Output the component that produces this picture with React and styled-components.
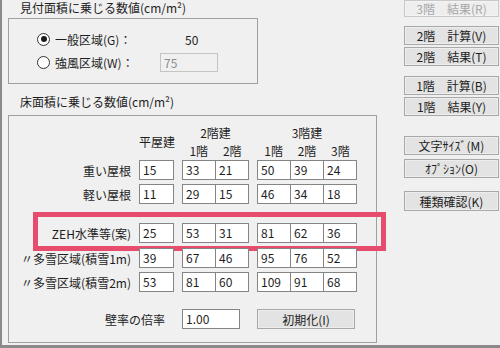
import React from 'react';
import styled, { createGlobalStyle } from 'styled-components';

const GlobalStyle = createGlobalStyle`
  html, body {
    margin: 0;
    padding: 0;
    background: #f0f0f0;
  }
  body {
    font-family: "Noto Sans CJK JP", "Liberation Sans", sans-serif;
    font-size: 12px;
    color: #1e1e1e;
  }
`;

const Window = styled.div`
  width: 500px;
  height: 348px;
  box-sizing: border-box;
  border-left: 2px solid #8a8a8a;
  border-bottom: 3px solid #8a8a8a;
  background: #f0f0f0;
  display: flex;
  overflow: hidden;
`;

const LeftPane = styled.div`
  width: 375px;
  padding-left: 6px;
  display: flex;
  flex-direction: column;
`;

const RightPane = styled.div`
  width: 95px;
  margin-left: 21px;
  display: flex;
  flex-direction: column;
`;

const GroupTitle = styled.div`
  height: 16px;
  line-height: 16px;
  padding-left: 12px;
  margin-top: ${p => p.$mt || 0}px;
  white-space: nowrap;
`;

const GroupBox = styled.div`
  box-sizing: border-box;
  width: ${p => p.$w}px;
  height: ${p => p.$h}px;
  margin-top: ${p => p.$mt}px;
  border: 1px solid #a0a0a0;
  padding: ${p => p.$pad};
`;

const RadioRow = styled.div`
  display: flex;
  align-items: center;
  height: 20px;
  & + & {
    margin-top: 3px;
  }
`;

const Radio = styled.span`
  position: relative;
  box-sizing: border-box;
  width: 13px;
  height: 13px;
  border-radius: 50%;
  border: 1px solid #333;
  background: #fff;
  flex: none;
  &::after {
    content: '';
    display: ${p => (p.$checked ? 'block' : 'none')};
    position: absolute;
    left: 2.5px;
    top: 2.5px;
    width: 6px;
    height: 6px;
    border-radius: 50%;
    background: #1a1a1a;
  }
`;

const RadioLabel = styled.span`
  width: 105px;
  margin-left: 5px;
  white-space: nowrap;
`;

const StaticValue = styled.span`
  margin-left: 25px;
`;

const Field = styled.div`
  box-sizing: border-box;
  width: ${p => p.$w || 34}px;
  height: ${p => p.$h || 20}px;
  border: 1px solid ${p => (p.$disabled ? '#c4c4c4' : '#858585')};
  background: ${p => (p.$disabled ? '#f0f0f0' : '#fff')};
  color: ${p => (p.$disabled ? '#8c8c8c' : '#1e1e1e')};
  padding-left: 3px;
  line-height: 18px;
  flex: none;
  & + & {
    margin-left: -1px;
  }
`;

const FieldGroup = styled.div`
  display: flex;
`;

const TableGrid = styled.div`
  display: grid;
  grid-template-columns: 122px 35px 67px 100px;
  column-gap: 8px;
`;

const HeadGrid = styled(TableGrid)`
  grid-template-rows: 16px 16px;
  row-gap: 2px;
  line-height: 16px;
`;

const HeadCell = styled.div`
  grid-column: ${p => p.$col};
  grid-row: ${p => p.$row};
  align-self: center;
  text-align: center;
  white-space: nowrap;
`;

const SubHeads = styled.div`
  grid-column: ${p => p.$col};
  grid-row: 2;
  display: flex;
  & > span {
    flex: 1;
    text-align: center;
  }
`;

const DataRow = styled(TableGrid)`
  position: relative;
  height: 20px;
  align-items: center;
  margin-top: ${p => p.$mt}px;
`;

const RowLabel = styled.div`
  grid-column: ${p => (p.$span ? '1 / 3' : '1')};
  text-align: right;
  white-space: nowrap;
  padding-right: ${p => p.$pr || 0}px;
`;

const Highlight = styled.div`
  position: absolute;
  top: -11px;
  bottom: -8px;
  left: 24px;
  right: -10px;
  border: 5px solid #e84c6c;
  pointer-events: none;
`;

const Button = styled.div`
  box-sizing: border-box;
  width: ${p => p.$w || 95}px;
  height: ${p => p.$h || 19}px;
  margin-top: ${p => p.$mt || 0}px;
  border: 1px solid ${p => (p.$disabled ? '#c8c8c8' : '#a8a8a8')};
  background: ${p => (p.$disabled ? '#eeeeee' : '#e3e3e3')};
  box-shadow: inset 0 0 0 1px ${p => (p.$disabled ? '#f4f4f4' : '#ededed')};
  color: ${p => (p.$disabled ? '#a8a8a8' : '#1e1e1e')};
  display: flex;
  align-items: center;
  justify-content: center;
  white-space: nowrap;
  flex: none;
`;

const rows = [
  { label: '重い屋根', mt: 1, v: ['15', '33', '21', '50', '39', '24'] },
  { label: '軽い屋根', mt: 4, v: ['11', '29', '15', '46', '34', '18'] },
  { label: 'ZEH水準等(案)', mt: 19, v: ['25', '53', '31', '81', '62', '36'], mark: true },
  { label: '〃多雪区域(積雪1m)', mt: 5, v: ['39', '67', '46', '95', '76', '52'] },
  { label: '〃多雪区域(積雪2m)', mt: 4, v: ['53', '81', '60', '109', '91', '68'] },
];

const buttons = [
  { text: '3階　結果(R)', mt: 0, h: 17, disabled: true },
  { text: '2階　計算(V)', mt: 9 },
  { text: '2階　結果(T)', mt: 2 },
  { text: '1階　計算(B)', mt: 10 },
  { text: '1階　結果(Y)', mt: 2 },
  { text: '文字ｻｲｽﾞ(M)', mt: 20 },
  { text: 'ｵﾌﾟｼｮﾝ(O)', mt: 4 },
  { text: '種類確認(K)', mt: 13, h: 20 },
];

export default function App() {
  return (
    <>
      <GlobalStyle />
      <Window>
        <LeftPane>
          <GroupTitle>見付面積に乗じる数値(cm/m²)</GroupTitle>
          <GroupBox $w={250} $h={66} $mt={2} $pad="10px 0 0 28px">
            <RadioRow>
              <Radio $checked />
              <RadioLabel>一般区域(G)：</RadioLabel>
              <StaticValue>50</StaticValue>
            </RadioRow>
            <RadioRow>
              <Radio />
              <RadioLabel>強風区域(W)：</RadioLabel>
              <Field $w={58} $h={19} $disabled>75</Field>
            </RadioRow>
          </GroupBox>

          <GroupTitle $mt={10}>床面積に乗じる数値(cm/m²)</GroupTitle>
          <GroupBox $w={369} $h={228} $mt={5} $pad="9px 0 0 0">
            <HeadGrid>
              <HeadCell $col={2} $row="1 / 3">平屋建</HeadCell>
              <HeadCell $col={3} $row={1}>2階建</HeadCell>
              <SubHeads $col={3}>
                <span>1階</span>
                <span>2階</span>
              </SubHeads>
              <HeadCell $col={4} $row={1}>3階建</HeadCell>
              <SubHeads $col={4}>
                <span>1階</span>
                <span>2階</span>
                <span>3階</span>
              </SubHeads>
            </HeadGrid>

            {rows.map(r => (
              <DataRow key={r.label} $mt={r.mt}>
                {r.mark && <Highlight />}
                <RowLabel>{r.label}</RowLabel>
                <Field $w={35}>{r.v[0]}</Field>
                <FieldGroup>
                  <Field>{r.v[1]}</Field>
                  <Field>{r.v[2]}</Field>
                </FieldGroup>
                <FieldGroup>
                  <Field>{r.v[3]}</Field>
                  <Field>{r.v[4]}</Field>
                  <Field>{r.v[5]}</Field>
                </FieldGroup>
              </DataRow>
            ))}

            <DataRow $mt={17}>
              <RowLabel $span $pr={9}>壁率の倍率</RowLabel>
              <Field $w={58}>1.00</Field>
              <Button $w={98} $h={20}>初期化(I)</Button>
            </DataRow>
          </GroupBox>
        </LeftPane>

        <RightPane>
          {buttons.map(b => (
            <Button key={b.text} $mt={b.mt} $h={b.h} $disabled={b.disabled}>
              {b.text}
            </Button>
          ))}
        </RightPane>
      </Window>
    </>
  );
}
